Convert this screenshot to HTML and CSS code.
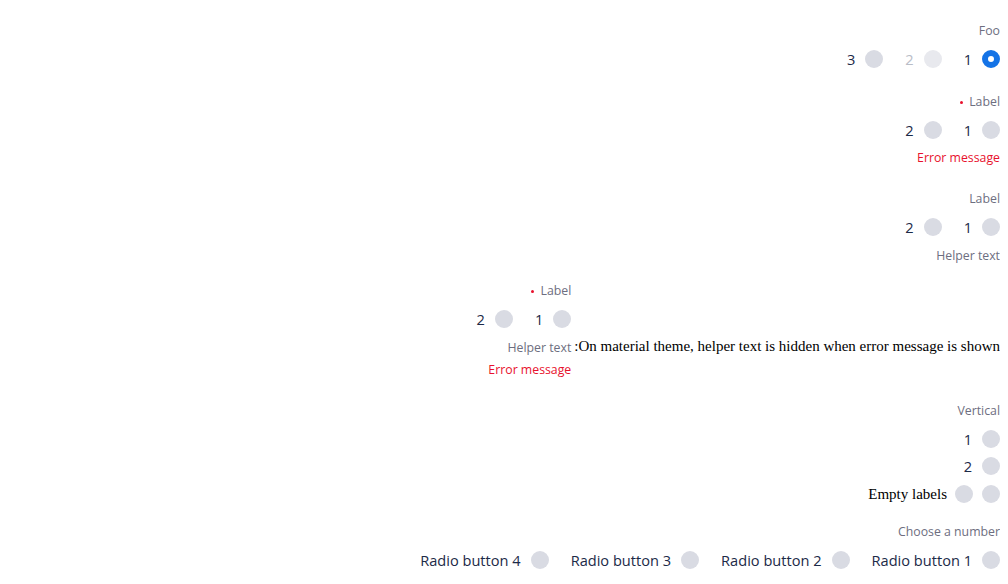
FILE: index.html
```html
<!DOCTYPE html>
<html lang="en" dir="rtl">
<head>
<meta charset="utf-8">
<title>Radio groups</title>
<link rel="stylesheet" href="styles.css">
</head>
<body>
<div class="group first">
  <div class="glabel">Foo</div>
  <div class="row">
    <label class="opt"><span class="radio checked"></span><span class="txt">1</span></label>
    <label class="opt disabled"><span class="radio"></span><span class="txt">2</span></label>
    <label class="opt"><span class="radio"></span><span class="txt">3</span></label>
  </div>
</div>

<div class="group">
  <div class="glabel"><span>Label</span><span class="req"></span></div>
  <div class="row">
    <label class="opt"><span class="radio"></span><span class="txt">1</span></label>
    <label class="opt"><span class="radio"></span><span class="txt">2</span></label>
  </div>
  <div class="msg error">Error message</div>
</div>

<div class="group">
  <div class="glabel">Label</div>
  <div class="row">
    <label class="opt"><span class="radio"></span><span class="txt">1</span></label>
    <label class="opt"><span class="radio"></span><span class="txt">2</span></label>
  </div>
  <div class="msg helper">Helper text</div>
</div>

<div class="noteline">
  <span class="note">On material theme, helper text is hidden when error message is shown:</span>
  <div class="group inline">
    <div class="glabel"><span>Label</span><span class="req"></span></div>
    <div class="row">
      <label class="opt"><span class="radio"></span><span class="txt">1</span></label>
      <label class="opt"><span class="radio"></span><span class="txt">2</span></label>
    </div>
    <div class="msg helper">Helper text</div>
    <div class="msg error second">Error message</div>
  </div>
</div>

<div class="group vert">
  <div class="glabel">Vertical</div>
  <div class="row vertical">
    <label class="opt"><span class="radio"></span><span class="txt">1</span></label>
    <label class="opt"><span class="radio"></span><span class="txt">2</span></label>
  </div>
</div>

<div class="emptyline">
  <span class="emptyradios">
    <span class="radio"></span>
    <span class="radio"></span>
  </span>
  <span class="note">Empty labels</span>
</div>

<div class="group last">
  <div class="glabel">Choose a number</div>
  <div class="row">
    <label class="opt"><span class="radio"></span><span class="txt">Radio button 1</span></label>
    <label class="opt"><span class="radio"></span><span class="txt">Radio button 2</span></label>
    <label class="opt"><span class="radio"></span><span class="txt">Radio button 3</span></label>
    <label class="opt"><span class="radio"></span><span class="txt">Radio button 4</span></label>
  </div>
</div>
</body>
</html>
```

FILE: styles.css
```css
html, body {
  background: #ffffff;
}
body {
  margin: 8px 8px 0;
  direction: rtl;
  font-family: "Liberation Serif", "Times New Roman", serif;
  font-size: 15px;
  color: #000000;
}
.group {
  padding: 13px 0 10px;
  font-family: "Open Sans", "Noto Sans", sans-serif;
}
.group.first {
  padding-top: 14px;
  padding-bottom: 11px;
}
.group.inline {
  padding-top: 7px;
}
.group.vert {
  padding-bottom: 8px;
}
.group.last {
  padding-bottom: 0;
}
.glabel {
  font-size: 12.3px;
  line-height: 18px;
  color: #6d6e80;
  margin-bottom: 9px;
  display: flex;
  align-items: center;
}
.req {
  width: 3px;
  height: 3px;
  border-radius: 50%;
  background: #e8112d;
  margin-right: 6px;
  margin-top: 1px;
}
.row {
  display: flex;
  gap: 22px;
}
.row.vertical {
  flex-direction: column;
  align-items: flex-start;
  gap: 7px;
}
.opt {
  display: flex;
  align-items: center;
  gap: 10px;
  height: 20px;
  font-size: 14.6px;
  color: #1c2a48;
}
.radio {
  display: block;
  width: 18px;
  height: 18px;
  box-sizing: border-box;
  border-radius: 50%;
  background: #d9dbe3;
  flex: none;
}
.radio.checked {
  background: #ffffff;
  border: 6px solid #1473e6;
}
.opt.disabled {
  color: #b9bdc7;
}
.opt.disabled .radio {
  background: #e8e9ee;
}
.msg {
  font-size: 12.3px;
  line-height: 18px;
  color: #6d6e80;
  margin-top: 9px;
}
.msg.helper {
  margin-top: 10px;
}
.msg.error {
  color: #e8112d;
}
.msg.second {
  margin-top: 4px;
}
.noteline {
  display: flex;
  align-items: flex-end;
}
.noteline .note {
  margin-left: 3px;
  margin-bottom: 34px;
  line-height: 18px;
}
.emptyline {
  display: flex;
  align-items: center;
  gap: 8px;
  height: 20px;
  margin-bottom: 6px;
}
.emptyradios {
  display: flex;
  gap: 9px;
}
```
